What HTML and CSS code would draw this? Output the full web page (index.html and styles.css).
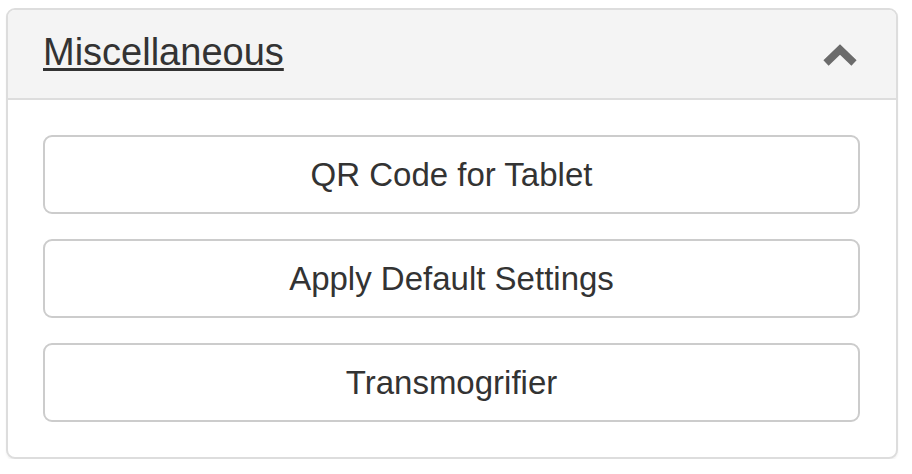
FILE: index.html
```html
<!DOCTYPE html>
<html lang="en">
<head>
    <meta charset="UTF-8">
    <meta name="viewport" content="width=device-width, initial-scale=1.0">
    <title>Miscellaneous</title>
    <link rel="stylesheet" href="styles.css">
</head>
<body>
    <div class="page">
        <div class="panel">
            <div class="panel-heading">
                <a class="panel-title" href="#misc">Miscellaneous</a>
                <svg class="chevron" width="36" height="24" viewBox="0 0 36 24">
                    <polyline points="4,20 18,6.5 32,20" fill="none" stroke="#6b6b6b" stroke-width="7.5" stroke-linejoin="miter" stroke-linecap="butt"/>
                </svg>
            </div>
            <div class="panel-body" id="misc">
                <button type="button" class="btn">QR Code for Tablet</button>
                <button type="button" class="btn">Apply Default Settings</button>
                <button type="button" class="btn">Transmogrifier</button>
            </div>
        </div>
    </div>
</body>
</html>
```

FILE: styles.css
```css
body {
    margin: 0;
    font-family: "Liberation Sans", Arial, sans-serif;
    color: #333;
    background: #fff;
}
.page {
    padding: 8px 14px 0 6px;
}
.panel {
    border: 2px solid #ddd;
    border-radius: 9px;
    background: #fff;
    box-shadow: 0 2px 2px rgba(0, 0, 0, 0.05);
    overflow: hidden;
}
.panel-heading {
    display: flex;
    align-items: center;
    justify-content: space-between;
    height: 90px;
    padding: 0 38px 0 35px;
    background: #f4f4f4;
    border-bottom: 2px solid #ddd;
    box-sizing: border-box;
}
.panel-title {
    font-size: 38px;
    color: #333;
    text-decoration: underline;
    text-decoration-thickness: 3px;
    text-underline-offset: 3px;
    margin-top: -4px;
}
.chevron {
    display: block;
    margin-top: 2px;
}
.panel-body {
    display: flex;
    flex-direction: column;
    gap: 25px;
    padding: 35px 36px 35px 35px;
}
.btn {
    height: 79px;
    font-family: inherit;
    font-size: 33px;
    color: #333;
    background: #fff;
    border: 2px solid #ccc;
    border-radius: 9px;
    cursor: pointer;
}
```
